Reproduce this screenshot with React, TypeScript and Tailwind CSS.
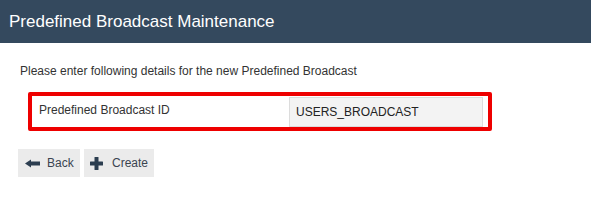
function ArrowLeftIcon() {
  return (
    <svg width="15" height="9" viewBox="0 0 15 9" className="fill-[#2c3e50]">
      <path d="M0 4.5 L6 0.5 L6 2.5 L15 2.5 L15 6.5 L6 6.5 L6 8.5 Z" />
    </svg>
  )
}

function PlusIcon() {
  return (
    <svg width="13" height="13" viewBox="0 0 13 13" className="fill-[#2c3e50]">
      <rect x="4.5" y="0" width="4" height="13" rx="0.5" />
      <rect x="0" y="4.5" width="13" height="4" rx="0.5" />
    </svg>
  )
}

export default function App() {
  return (
    <div className="w-[591px] h-[202px] bg-white font-['Liberation_Sans',Arial,sans-serif]">
      <div className="h-[43px] bg-[#34495e] flex items-center pl-[9px]">
        <h1 className="text-white text-[17px] leading-none">Predefined Broadcast Maintenance</h1>
      </div>
      <div className="pl-[20px] pt-[21px]">
        <p className="text-[12px] leading-[14px] text-[#333]">
          Please enter following details for the new Predefined Broadcast
        </p>
        <div className="mt-[14px] ml-[8px] w-[464px] h-[39px] border-[4px] border-[#ee0000] rounded-[2px] flex items-center">
          <span className="pl-[7px] w-[257px] text-[12px] text-[#333] -mt-[3px]">Predefined Broadcast ID</span>
          <div className="w-[194px] h-[30px] bg-[#f3f3f3] border border-[#dcdcdc] flex items-center pl-[6px] text-[12px] text-[#222]">
            USERS_BROADCAST
          </div>
        </div>
        <div className="mt-[18px] flex gap-[4px] -ml-[2px]">
          <button className="h-[28px] w-[62px] bg-[#ebebeb] flex items-center gap-[7px] pl-[7px] text-[12px] text-[#3a4450]">
            <ArrowLeftIcon />
            <span>Back</span>
          </button>
          <button className="h-[28px] w-[70px] bg-[#ebebeb] flex items-center gap-[9px] pl-[6px] text-[12px] text-[#3a4450]">
            <PlusIcon />
            <span>Create</span>
          </button>
        </div>
      </div>
    </div>
  )
}
